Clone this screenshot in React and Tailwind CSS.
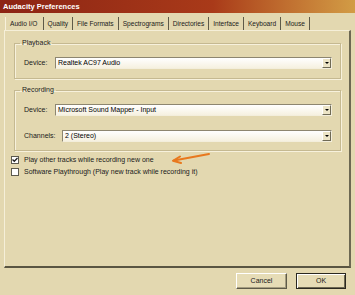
import React from 'react';

const tabs = ['Audio I/O', 'Quality', 'File Formats', 'Spectrograms', 'Directories', 'Interface', 'Keyboard', 'Mouse'];

const Combo = ({ value, className }) => (
  <div className={`h-[12px] flex items-center bg-gradient-to-b from-white to-[#f6f1e0] border-t border-l border-[#8d8670] border-b border-r border-b-[#f3eedc] border-r-[#f3eedc] ${className}`}>
    <span className="flex-1 pl-[2px] leading-[10px] text-black">{value}</span>
    <div className="w-[9px] h-[10px] flex items-center justify-center bg-[#ece4c6] border-r border-b border-[#6f6a55] border-t border-l border-t-white border-l-white">
      <div className="w-0 h-0 border-l-[2px] border-r-[2px] border-t-[2px] border-l-transparent border-r-transparent border-t-black" />
    </div>
  </div>
);

const Group = ({ title, children, className }) => (
  <fieldset className={`ml-[9px] w-[327px] border border-[#c5b991] shadow-[inset_1px_1px_0_#f7f1dc,1px_1px_0_#f7f1dc] ${className}`}>
    <legend className="ml-[5px] px-[2px] leading-[8px]">{title}</legend>
    {children}
  </fieldset>
);

const Check = ({ checked, label, children }) => (
  <div className="h-[12px] flex items-center pl-[6px]">
    <div className="w-[8px] h-[8px] bg-white border border-[#5c5a4e] flex items-center justify-center">
      {checked && (
        <svg width="6" height="6" viewBox="0 0 6 6">
          <path d="M0.5 2.5 L2.3 4.3 L5.5 1" stroke="#222" strokeWidth="1.3" fill="none" />
        </svg>
      )}
    </div>
    <span className="ml-[5px] leading-[10px]">{label}</span>
    {children}
  </div>
);

export default function App() {
  return (
    <div className="w-[355px] h-[295px] bg-[#e3d8b0] flex flex-col text-[7px] text-[#1a1a1a] overflow-hidden" style={{ fontFamily: '"Liberation Sans", Arial, sans-serif' }}>
      <div className="h-[13px] bg-gradient-to-r from-[#8c2414] via-[#a93a19] via-60% to-[#d29c45] text-white font-bold text-[7.5px] leading-[13px] pl-[3px]">
        Audacity Preferences
      </div>

      <div className="h-[17px] flex items-end pl-[5px] text-[6.6px]">
        {tabs.map((t, i) => (
          <div key={t} className={`h-[13px] flex items-center border-r border-[#5e5a48] ${i === 0 ? 'pl-[4px] pr-[5px] border-l border-l-[#f7f1dc]' : 'px-[4px]'}`}>
            {t}
          </div>
        ))}
      </div>

      <div className="ml-[4px] w-[347px] h-[238px] border-l border-l-[#f5efd8] border-r-2 border-r-[#6d6852] border-b-2 border-b-[#5a5542] border-t border-t-[#f5efd8]">
        <Group title="Playback" className="mt-[8px] pb-[9px]">
          <div className="flex items-center mt-[10px] pl-[9px]">
            <span className="w-[31px]">Device:</span>
            <Combo value="Realtek AC97 Audio" className="w-[277px]" />
          </div>
        </Group>

        <Group title="Recording" className="mt-[7px] pb-[8px]">
          <div className="flex items-center mt-[10px] pl-[9px]">
            <span className="w-[31px]">Device:</span>
            <Combo value="Microsoft Sound Mapper - Input" className="w-[277px]" />
          </div>
          <div className="flex items-center mt-[14px] pl-[9px]">
            <span className="w-[38px]">Channels:</span>
            <Combo value="2 (Stereo)" className="w-[270px]" />
          </div>
        </Group>

        <div className="mt-[3px]">
          <Check checked label="Play other tracks while recording new one">
            <svg width="40" height="12" viewBox="0 0 40 12" className="ml-[17px] mt-[-4px]">
              <path d="M3 8.5 L38 2" stroke="#e8781e" strokeWidth="2" strokeLinecap="round" fill="none" />
              <path d="M9 4.5 L2 8.8 L10 11" stroke="#e8781e" strokeWidth="2" strokeLinecap="round" strokeLinejoin="round" fill="none" />
            </svg>
          </Check>
          <Check label="Software Playthrough (Play new track while recording it)" />
        </div>
      </div>

      <div className="flex justify-end gap-[9px] pr-[9px] mt-[5px]">
        <button className="w-[51px] h-[16px] bg-[#e6dcb6] border border-t-white border-l-white border-r-[#5e5a48] border-b-[#5e5a48] shadow-[inset_-1px_-1px_0_#a59d80]">
          Cancel
        </button>
        <button className="w-[50px] h-[16px] bg-[#e6dcb6] border border-[#2a2820] shadow-[inset_1px_1px_0_#fff,inset_-1px_-1px_0_#6d6852]">
          OK
        </button>
      </div>
    </div>
  );
}
